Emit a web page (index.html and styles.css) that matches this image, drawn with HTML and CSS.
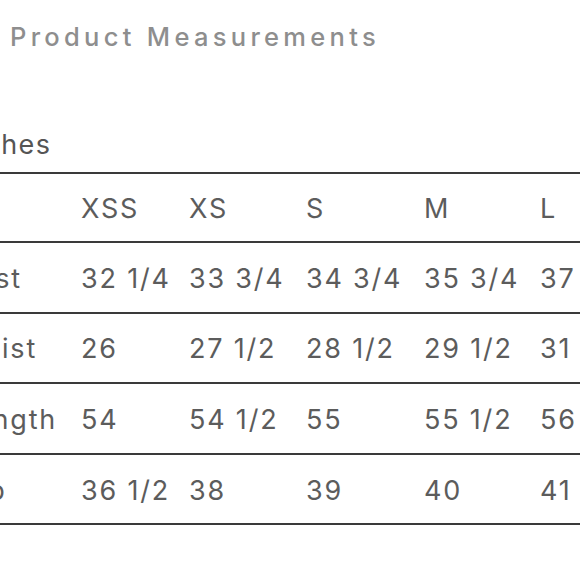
FILE: index.html
```html
<!DOCTYPE html>
<html lang="en">
<head>
<meta charset="utf-8">
<title>Product Measurements</title>
<link rel="stylesheet" href="styles.css">
</head>
<body>
<div class="page">
  <h2 class="title">Product Measurements</h2>
  <div class="sheet">
    <div class="unit">Inches</div>
    <table class="chart">
      <colgroup>
        <col class="c-label"><col class="c-xss"><col class="c-xs"><col class="c-s"><col class="c-m"><col class="c-l">
      </colgroup>
      <thead>
        <tr><th></th><th>XSS</th><th>XS</th><th>S</th><th>M</th><th>L</th></tr>
      </thead>
      <tbody>
        <tr><td>Bust</td><td>32 1/4</td><td>33 3/4</td><td>34 3/4</td><td>35 3/4</td><td>37 1/4</td></tr>
        <tr><td>Waist</td><td>26</td><td>27 1/2</td><td>28 1/2</td><td>29 1/2</td><td>31</td></tr>
        <tr><td>Length</td><td>54</td><td>54 1/2</td><td>55</td><td>55 1/2</td><td>56</td></tr>
        <tr><td>Hip</td><td>36 1/2</td><td>38</td><td>39</td><td>40</td><td>41 1/2</td></tr>
      </tbody>
    </table>
  </div>
</div>
</body>
</html>
```
FILE: styles.css
```css
html, body {
  margin: 0;
  padding: 0;
  background: #ffffff;
}
body {
  width: 580px;
  height: 580px;
  overflow: hidden;
  font-family: Inter, "Liberation Sans", sans-serif;
}
.page {
  display: flex;
  flex-direction: column;
}
.title {
  margin: 0;
  padding: 20px 0 0 10px;
  font-size: 25.5px;
  font-weight: 500;
  line-height: 34px;
  letter-spacing: 4.3px;
  color: #8e8e8e;
}
.sheet {
  margin-left: -42px;
  width: 700px;
}
.unit {
  margin-top: 74px;
  font-size: 27px;
  line-height: 34px;
  letter-spacing: 1.5px;
  color: #555555;
}
.chart {
  margin-top: 10px;
  border-collapse: collapse;
  table-layout: fixed;
  width: 700px;
  color: #5c5c5c;
  font-size: 27px;
  letter-spacing: 1.8px;
}
.c-label { width: 123px; }
.c-xss { width: 108px; }
.c-xs { width: 117px; }
.c-s { width: 118px; }
.c-m { width: 116px; }
.c-l { width: 118px; }
.chart th, .chart td {
  text-align: left;
  font-weight: 400;
  padding: 2px 0 0;
  white-space: nowrap;
  overflow: hidden;
}
.chart th {
  height: 65px;
}
.chart td {
  height: 66.6px;
}
.chart tr {
  border-top: 2px solid #3a3a3a;
  border-bottom: 2px solid #3a3a3a;
}
```
